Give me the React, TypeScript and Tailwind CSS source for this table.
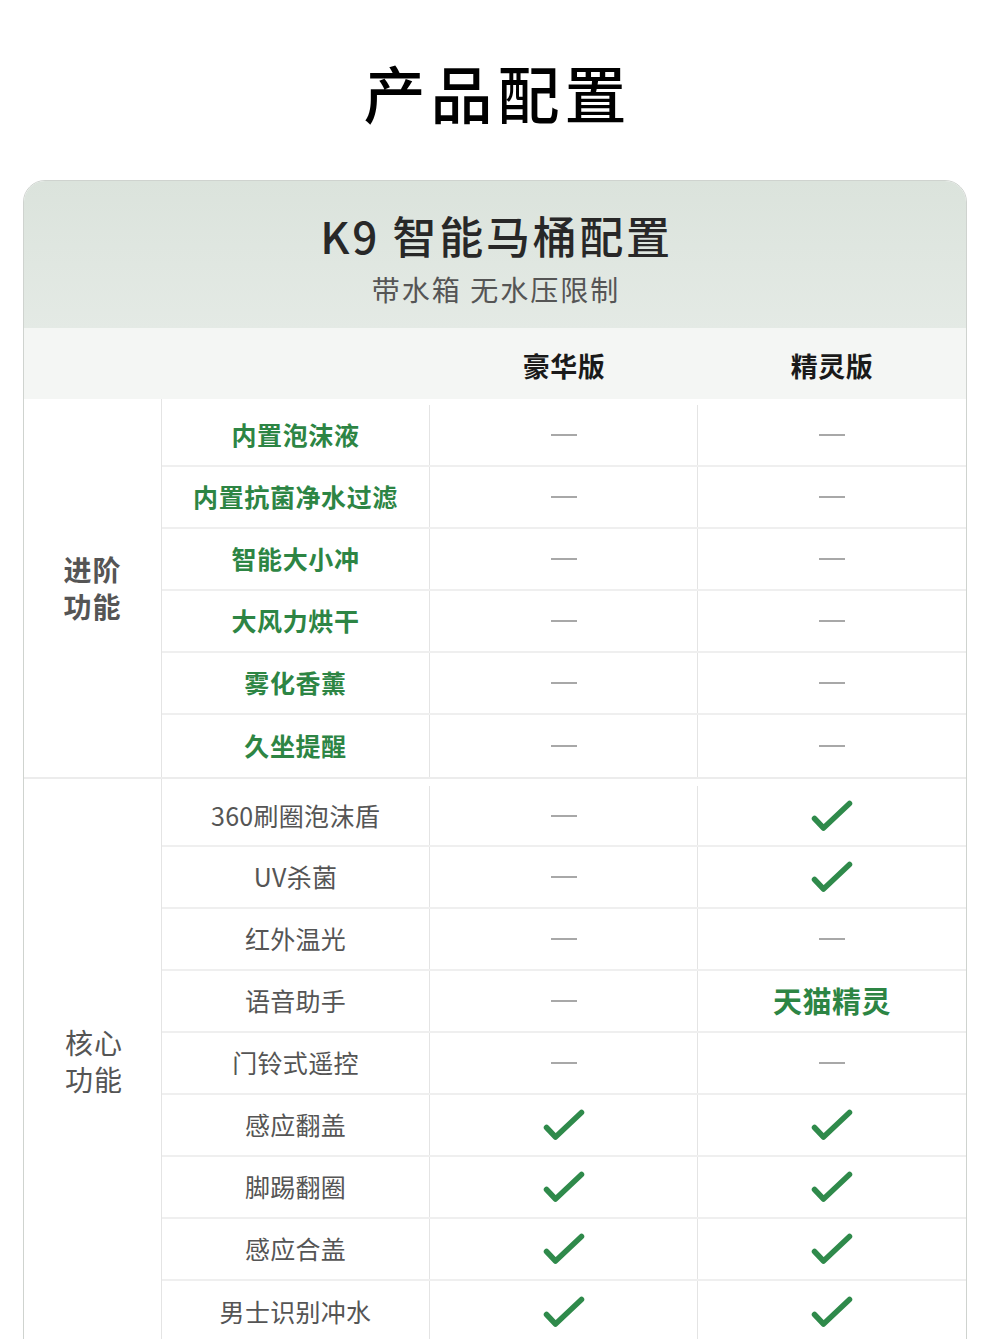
import React from "react";

type Cell = "dash" | "check" | string;

const advanced: [string, Cell, Cell][] = [
  ["内置泡沫液", "dash", "dash"],
  ["内置抗菌净水过滤", "dash", "dash"],
  ["智能大小冲", "dash", "dash"],
  ["大风力烘干", "dash", "dash"],
  ["雾化香薰", "dash", "dash"],
  ["久坐提醒", "dash", "dash"],
];

const core: [string, Cell, Cell][] = [
  ["360刷圈泡沫盾", "dash", "check"],
  ["UV杀菌", "dash", "check"],
  ["红外温光", "dash", "dash"],
  ["语音助手", "dash", "天猫精灵"],
  ["门铃式遥控", "dash", "dash"],
  ["感应翻盖", "check", "check"],
  ["脚踢翻圈", "check", "check"],
  ["感应合盖", "check", "check"],
  ["男士识别冲水", "check", "check"],
];

function Check() {
  return (
    <svg width="42" height="32" viewBox="0 0 42 32" fill="none">
      <polyline
        points="3.5,18.5 12.5,28 38.5,3.5"
        stroke="#2f8a4b"
        strokeWidth="5.5"
        strokeLinecap="round"
        strokeLinejoin="round"
      />
    </svg>
  );
}

function Value({ v }: { v: Cell }) {
  if (v === "dash") return <div className="w-[26px] h-[2px] bg-[#a8a8a8]" />;
  if (v === "check") return <Check />;
  return <span className="text-[29px] font-bold text-[#2d8544] tracking-[0.5px]">{v}</span>;
}

function Row({
  name,
  a,
  b,
  green,
  first,
  last,
  topPad,
}: {
  name: string;
  a: Cell;
  b: Cell;
  green: boolean;
  first: boolean;
  last: boolean;
  topPad: string;
}) {
  return (
    <div
      className={`flex ${first ? topPad : "h-[62px]"} ${last ? "" : "border-b-2 border-[#efefef]"}`}
    >
      <div className="w-[268px] flex items-center justify-center border-r border-[#e4e4e4]">
        <span
          className={
            green
              ? "text-[25px] font-bold text-[#2d8544] tracking-[0.6px]"
              : "text-[25px] text-[#555555] tracking-[0.3px]"
          }
        >
          {name}
        </span>
      </div>
      <div className="w-[268px] flex items-center justify-center border-r border-[#e4e4e4]">
        <Value v={a} />
      </div>
      <div className="w-[268px] flex items-center justify-center">
        <Value v={b} />
      </div>
    </div>
  );
}

function Group({
  label1,
  label2,
  rows,
  green,
  topPad,
  bold,
}: {
  label1: string;
  label2: string;
  rows: [string, Cell, Cell][];
  green: boolean;
  topPad: string;
  bold: boolean;
}) {
  return (
    <div className="flex border-b-2 border-[#ececec]">
      <div className="w-[138px] flex items-center justify-center border-r border-[#e4e4e4]">
        <div
          className={`text-[28px] leading-[37px] text-[#555555] tracking-[1px] ${bold ? "font-bold" : "pl-[3px]"}`}
        >
          <div>{label1}</div>
          <div>{label2}</div>
        </div>
      </div>
      <div className="flex flex-col">
        {rows.map((r, i) => (
          <Row
            key={r[0]}
            name={r[0]}
            a={r[1]}
            b={r[2]}
            green={green}
            first={i === 0}
            last={i === rows.length - 1}
            topPad={topPad}
          />
        ))}
      </div>
    </div>
  );
}

export default function App() {
  return (
    <div className="w-[990px] h-[1339px] overflow-hidden bg-white font-['Noto_Sans_CJK_SC','Noto_Sans',sans-serif]">
      <div className="h-[180px] flex items-center justify-center pt-[4px]">
        <h1 className="text-[62px] font-medium text-black tracking-[5px] leading-none pl-[5px]">
          产品配置
        </h1>
      </div>
      <div className="mx-[23px] border border-[#cfd3cf] rounded-t-[22px] overflow-hidden">
        <div className="h-[147px] bg-gradient-to-b from-[#dbe3dc] to-[#e4eae5] flex flex-col items-center pt-[30px]">
          <div className="text-[44px] font-medium text-[#282828] leading-[48px] tracking-[2.7px] pl-[3px]">
            K9&nbsp;智能马桶配置
          </div>
          <div className="text-[28px] text-[#555555] leading-[40px] mt-[10px] tracking-[2px] pl-[2px]">
            带水箱&nbsp;无水压限制
          </div>
        </div>
        <div className="h-[71px] bg-[#f4f6f4] flex pt-[5px]">
          <div className="w-[138px]" />
          <div className="w-[268px]" />
          <div className="w-[268px] flex items-center justify-center">
            <span className="text-[27px] font-bold text-[#1a1a1a] tracking-[0.5px]">豪华版</span>
          </div>
          <div className="w-[268px] flex items-center justify-center">
            <span className="text-[27px] font-bold text-[#1a1a1a] tracking-[0.5px]">精灵版</span>
          </div>
        </div>
        <Group
          label1="进阶"
          label2="功能"
          rows={advanced}
          green={true}
          topPad="h-[68px] pt-[6px]"
          bold={true}
        />
        <Group
          label1="核心"
          label2="功能"
          rows={core}
          green={false}
          topPad="h-[68px] pt-[7px]"
          bold={false}
        />
      </div>
    </div>
  );
}
